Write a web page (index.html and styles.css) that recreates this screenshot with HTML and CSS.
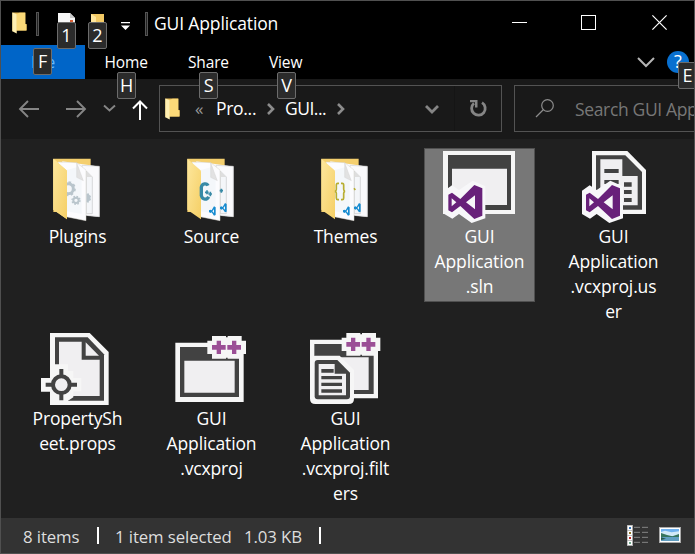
FILE: index.html
```html
<!DOCTYPE html>
<html lang="en">
<head>
<meta charset="utf-8">
<title>GUI Application</title>
<link rel="stylesheet" href="styles.css">
</head>
<body>
<svg class="defs" width="0" height="0" aria-hidden="true">
  <defs>
    <linearGradient id="gold" x1="0" x2="1" y1="0" y2="1"><stop offset="0" stop-color="#fde79d"/><stop offset="1" stop-color="#f5cf65"/></linearGradient>
    <symbol id="mini" viewBox="0 0 44 64" overflow="visible">
      <path d="M1 1h38v34h4v19H14L1 56z" fill="#edc25b"/>
      <path d="M1 1l13 5v57L1 56z" fill="#fff0b3"/>
      <path d="M14 6l8-4h17v33l3 2v17H14z" fill="#fbd978"/>
    </symbol>
    <symbol id="folder" viewBox="0 0 216 222" overflow="visible">
      <path d="M34 26h112v160H34z" fill="#f4cf6e"/>
      <path d="M60 34l100 14 12 2v150l-36-3z" fill="#f8f8fa"/>
      <path d="M120 46l52 3v151l-42-4z" fill="#fafafc" stroke="#d2d2d2" stroke-width="2"/>
      <path d="M133 63l18 18v110h-18z" fill="#f4f6f9" stroke="#b8b8b8" stroke-width="1.5"/>
      <path d="M133 63v18h18z" fill="#dedede"/>
      <path d="M48 36l56 2 28 22v152l-60-12z" fill="#fcfcfe" stroke="#d6d4cd" stroke-width="1.5"/>
      <path d="M74 60l30-8 15 38v102l-45-8z" fill="#f4f7fa"/>
      <path d="M104 38v44l20 10z" fill="#e2e2e2" stroke="#c8c8c8"/>
      <path d="M34 26l38 33q3 2 3 6v143L34 179z" fill="url(#gold)"/>
    </symbol>
    <symbol id="vs" viewBox="0 0 130 130" overflow="visible">
      <path d="M0 30l23-16 21 14L85 0l38 17v96l-41 14-38-27-20 14L0 100z" fill="#f7f7f9"/>
      <path fill-rule="evenodd" d="M12 42l11-6 25 19 42-42 24 10v82l-24 10-42-39-25 19-11-6zM22 53v24l14-12zM92 44L65 65l27 21z" fill="#68217a"/>
    </symbol>
    <symbol id="plus" viewBox="0 0 116 68" overflow="visible">
      <path d="M14 0h42v4h5V0h42v14h13v40h-14v14H61v-3h-5v3H14V54H0V14h14z" fill="#f6f6f6"/>
      <path d="M28 14h13v13h14v14H41v13H28V41H14V27h14zM74 14h13v13h14v14H87v13H74V41H60V27h14z" fill="#9b4f96"/>
    </symbol>
    <symbol id="code" viewBox="0 0 20 28" overflow="visible">
      <path fill-rule="evenodd" d="M0 12l4-2 4 2 7-12 5 3v23l-5 2-7-10-4 2-4-3zM15 9l-5 6 5 5z" fill="#168bd0"/>
    </symbol>
  </defs>
</svg>
<div class="window">
  <header class="titlebar">
    <svg class="mini app" viewBox="0 0 44 64"><use href="#mini"/></svg>
    <i class="divider first"></i>
    <div class="quick page-action">
      <svg width="17" height="19" viewBox="0 0 17 19"><path d="M0 0h12l5 5v14H0z" fill="#f7f7f7"/><path d="M12 0v5h5" fill="#c9c9c9"/><path d="M12 7h3v3h-3z" fill="#d95f36"/></svg>
      <kbd>1</kbd>
    </div>
    <div class="quick folder-action"><svg class="mini-back" viewBox="0 0 13 16"><path d="M0 0h13v16H0z" fill="#f3ca65"/><path d="M0 0l5 3v13H0z" fill="#ffe69c"/></svg><kbd>2</kbd></div>
    <svg class="customize" width="10" height="8" viewBox="0 0 10 8"><path d="M0 0h9v1.200H0zM0 3.500h9L4.500 8z" fill="#fff"/></svg>
    <i class="divider second"></i>
    <h1>GUI Application</h1>
    <div class="controls">
      <svg width="15" height="15"><path d="M0 7.500h15" stroke="#fff"/></svg>
      <svg width="15" height="15"><rect x=".5" y=".5" width="14" height="14" fill="none" stroke="#fff"/></svg>
      <svg width="15" height="15"><path d="M.4.4l14.200 14.200M14.600.4L.4 14.600" stroke="#fff" stroke-width="1.200"/></svg>
    </div>
  </header>
  <nav class="tabs">
    <div class="tab file">File<kbd>F</kbd></div>
    <div class="tab home">Home<kbd>H</kbd></div>
    <div class="tab share">Share<kbd>S</kbd></div>
    <div class="tab view">View<kbd>V</kbd></div>
    <svg class="expand" width="18" height="12"><path d="M1 2l8 8 8-8" fill="none" stroke="#b5b5b5" stroke-width="2"/></svg>
    <div class="help">?<kbd>E</kbd></div>
  </nav>
  <div class="navigation">
    <svg class="arrows" width="134" height="24" viewBox="0 0 134 24" fill="none" stroke="#858585" stroke-width="1.900">
      <path d="M20 12H1.500M9 4l-8 8 8 8M47 12h18.500M58 4l8 8-8 8M85 8.500l5.500 5 5.500-5"/>
      <path d="M121 23V5M114 11.500l7-7 7 7" stroke="#fff" stroke-width="2"/>
    </svg>
    <div class="address">
      <svg class="mini" viewBox="0 0 44 64"><use href="#mini"/></svg>
      <span class="back">«</span><span class="pro">Pro...</span>
      <svg class="chev one" width="8" height="12"><path d="M1 1l5 5-5 5" fill="none" stroke="#8c8c8c" stroke-width="2.600"/></svg>
      <span class="gui">GUI...</span>
      <svg class="chev two" width="8" height="12"><path d="M1 1l5 5-5 5" fill="none" stroke="#8c8c8c" stroke-width="2.600"/></svg>
      <svg class="down" width="14" height="10"><path d="M1 2l6 6 6-6" fill="none" stroke="#858585" stroke-width="2.800"/></svg>
      <div class="refresh"><svg width="18" height="17" viewBox="0 0 18 17"><path d="M4 3.200a6.800 6.800 0 1 0 8-.6" fill="none" stroke="#858585" stroke-width="2.800"/><path d="M0 0h7.500v7.500H5V2.300H0z" fill="#858585"/></svg></div>
    </div>
    <div class="search"><svg width="20" height="19"><circle cx="12.500" cy="6.500" r="5.800" fill="none" stroke="#8c8c8c" stroke-width="1.200"/><path d="M8.500 10.500L1 18" stroke="#8c8c8c" stroke-width="1.300"/></svg><span>Search GUI Application</span></div>
  </div>
  <main class="files">
    <div class="item">
      <svg class="icon" viewBox="36 15 216 222"><use href="#folder" x="36" y="15" width="216" height="222"/>
        <circle cx="115" cy="131" r="15" fill="none" stroke="#b9c5cc" stroke-width="9"/><circle cx="115" cy="131" r="20" fill="none" stroke="#b9c5cc" stroke-width="5" stroke-dasharray="8 7.700"/>
        <circle cx="138" cy="166" r="8" fill="none" stroke="#b9c5cc" stroke-width="6"/><circle cx="138" cy="166" r="12" fill="none" stroke="#b9c5cc" stroke-width="4" stroke-dasharray="5 4.400"/>
        <path d="M170 147l5-3 3 6 5 3-2 6 2 6-6 3-2 6-5-3z" fill="#b9c5cc"/><path d="M70 41l38 33q3 2 3 6v143L70 194z" fill="url(#gold)"/></svg>
      <p>Plugins</p>
    </div>
    <div class="item">
      <svg class="icon" viewBox="438 15 216 222"><use href="#folder" x="438" y="15" width="216" height="222"/>
        <path d="M534 122c-3-8-18-8-20 5v25c4 14 17 13 22 3" fill="none" stroke="#388aa6" stroke-width="10"/>
        <path d="M525 142h11m-5-6v12M535 147h11m-5-7v14M569 137h10m-5-6v12" stroke="#388aa6" stroke-width="5"/>
        <use href="#code" x="537" y="184" width="20" height="28"/><use href="#code" x="570" y="174" width="20" height="28"/></svg>
      <p>Source</p>
    </div>
    <div class="item">
      <svg class="icon" viewBox="30 15 216 222"><use href="#folder" x="30" y="15" width="216" height="222"/>
        <path d="M117 115h-4q-4 0-4 6v12q0 5-4 6 4 1 4 6v14q0 5 4 5h4M123 115h4q4 0 4 6v12q0 5 4 6-4 1-4 6v14q0 5-4 5h-4M162 130l4 5" fill="none" stroke="#b8ae31" stroke-width="5"/>
        <use href="#code" x="129" y="184" width="20" height="28"/><use href="#code" x="162" y="174" width="20" height="28"/></svg>
      <p>Themes</p>
    </div>
    <div class="item selected">
      <svg class="icon" viewBox="72 15 216 222"><path d="M69 18h216v189H69z" fill="#f6f6f6"/><path d="M84 30h189v165H84z" fill="#424242"/><path d="M96 71h165v109H96z" fill="#f0eff1"/><use href="#vs" x="73" y="107" width="130" height="130"/></svg>
      <p>GUI<br>Application<br>.sln</p>
    </div>
    <div class="item">
      <svg class="icon" viewBox="54 15 216 222"><path d="M96 18h106l56 57v132H96z" fill="#f6f6f6"/><path d="M108 31h88l50 50v113H108z" fill="#424242"/><path d="M121 43h66v50h46v88H121z" fill="#f0eff1"/><path d="M133 72h43v12h-43zM133 105h43v12h-43zM192 112h23v13h-23zM192 135h23v12h-23zM192 159h23v12h-23z" fill="#424242"/><use href="#vs" x="66" y="107" width="130" height="130"/></svg>
      <p>GUI<br>Application<br>.vcxproj.us<br>er</p>
    </div>
    <div class="item">
      <svg class="icon" viewBox="36 21 216 222"><path d="M60 24h119l57 57v159H60z" fill="#f6f6f6"/><path d="M75 37h98l49 51v139H75z" fill="#424242"/><path d="M87 50h68v54h54v109H87z" fill="#f0eff1"/><path d="M167 52v40h40z" fill="#f0eff1"/>
        <path d="M74 118h40v20h16v21h24v40h-24v18l-16 10v13H61v-40H33v-41h28z" fill="#f6f6f6"/><circle cx="94" cy="179" r="25" fill="#f0eff1" stroke="#424242" stroke-width="12"/><path d="M94 132v21M94 205v21M47 179h22M120 179h21" stroke="#424242" stroke-width="12"/></svg>
      <p>PropertySh<br>eet.props</p>
    </div>
    <div class="item">
      <svg class="icon" viewBox="48 21 216 222"><path d="M46 53h205v178H46z" fill="#f6f6f6"/><path d="M60 66h177v150H60z" fill="#424242"/><path d="M73 107h151v96H73z" fill="#f0eff1"/><use href="#plus" x="142" y="33" width="116" height="68"/></svg>
      <p>GUI<br>Application<br>.vcxproj</p>
    </div>
    <div class="item">
      <svg class="icon" viewBox="45 21 216 222"><path d="M45 44h204v176H45z" fill="#f6f6f6"/><path d="M58 57h178v150H58z" fill="#424242"/><path d="M70 97h151v98H70z" fill="#f0eff1"/><path d="M61 92h73l43 43v86q0 16-16 16H61q-16 0-16-16V108q0-16 16-16z" fill="#f6f6f6"/><path d="M68 105h59l38 38v71q0 9-9 9H68q-9 0-9-9V114q0-9 9-9z" fill="#424242"/><path d="M71 117h48v29h34v65H71z" fill="#f0eff1"/><path d="M79 132h37v11H79zM79 153h62v10H79zM79 173h62v10H79zM79 193h62v10H79z" fill="#424242"/><use href="#plus" x="140" y="24" width="116" height="68"/></svg>
      <p>GUI<br>Application<br>.vcxproj.filt<br>ers</p>
    </div>
  </main>
  <footer class="status">
    <span class="count">8 items</span><i></i><span class="selection">1 item selected</span><span class="size">1.03 KB</span><i></i>
    <div class="modes">
      <svg width="22" height="22" viewBox="0 0 66 66"><path d="M0 3h18v63H0z" fill="#aaa"/><path d="M2 5h13v13H2zM2 20h13v13H2zM2 35h13v13H2zM2 50h13v13H2z" fill="#fff"/><path d="M6 9h6v6H6z" fill="#3977b8"/><path d="M6 24h6v6H6z" fill="#8e7528"/><path d="M6 39h6v6H6z" fill="#bb2828"/><path d="M6 54h6v6H6z" fill="#6fa58a"/><path d="M21 10h18M45 10h18M21 25h18M45 25h18M21 40h18M45 40h18M21 55h18M45 55h18" stroke="#858585" stroke-width="3"/></svg>
      <svg width="22" height="16" viewBox="0 0 66 48"><path d="M0 0h66v48H0z" fill="#aaa"/><path d="M3 3h60v42H3z" fill="#fff"/><path d="M6 6h54v36H6z" fill="#6fb1ef"/><path d="M6 15l12-4 20 5 22-3v14H6z" fill="#d2e9f7"/><path d="M6 18l18 6 16 4 20-7v10H6z" fill="#37755d"/><path d="M6 31h54v11H6z" fill="#629fc1"/><path d="M6 31l15 4-15 4z" fill="#28584c"/></svg>
    </div>
  </footer>
</div>
</body>
</html>
```

FILE: styles.css
```css
* { box-sizing: border-box; }
body { margin: 0; overflow: hidden; background: #202020; color: #fff; font: 17.500px/25px "Open Sans", "Noto Sans", sans-serif; }
svg { display: block; flex: none; overflow: visible; }
.defs { position: absolute; }
.window { width: 695px; height: 554px; border: 1px solid #505050; overflow: hidden; display: flex; flex-direction: column; }
kbd { position: absolute; width: 19px; height: 27px; border: 1px solid #6c6c6c; border-radius: 2px; background: #2b2b2b; color: #fff; font: 18px/25px "Open Sans", sans-serif; text-align: center; z-index: 2; }
.titlebar { height: 44px; flex: none; background: #000; display: flex; align-items: flex-start; }
.mini { width: 15px; height: 22px; }
.app { margin: 11px 0 0 11px; }
.divider { width: 3px; height: 24px; border: 1px solid #555; background: #222; flex: none; margin-top: 11px; }
.first { margin-left: 9px; }
.quick { position: relative; width: 17px; flex: none; margin-top: 12px; }
.quick kbd { left: -2px; top: 9px; }
.page-action { margin-left: 19px; }
.folder-action { margin-left: 16px; }
.folder-action kbd { left: -3px; }
.page-action kbd { left: -1px; }
.mini-back { width: 13px; height: 16px; margin-top: 1px; }
.customize { margin: 21px 0 0 13px; }
.second { margin-left: 14px; }
h1 { margin: 10px 0 0 6px; font: 17.500px/25px "Open Sans", sans-serif; letter-spacing: -.14px; white-space: nowrap; }
.controls { display: flex; margin: 14px 27px 0 auto; }
.controls svg + svg { margin-left: 54px; }
.controls svg:last-child { margin-left: 56px; }
.tabs { height: 34px; flex: none; background: #000; display: flex; font-size: 15.500px; line-height: 34px; }
.tab { position: relative; width: 81px; padding-left: 21px; letter-spacing: -.15px; }
.file { width: 84px; padding-left: 30px; background: #0065c8; color: #65bdff; }
.home { padding-left: 19.500px; width: 82px; }
.file kbd { left: 32px; top: 3px; }
.home kbd { left: 32px; top: 27px; }
.share kbd { left: 32px; top: 27px; }
.view kbd { left: 29px; top: 27px; }
.expand { margin: 11px 0 0 auto; }
.help { position: relative; width: 22px; height: 22px; margin: 6px 5px 0 12px; border-radius: 50%; background: #0870d0; font-size: 18px; line-height: 21px; text-align: center; }
.help kbd { left: 11px; top: 11px; }
.navigation { height: 60px; flex: none; padding: 6px 0 0 19px; background: #191919; display: flex; align-items: flex-start; }
.arrows { margin: 12px 5px 0 -1px; }
.address { display: flex; align-items: center; width: 343px; height: 47px; flex: none; border: 1px solid #535353; margin-left: 1px; }
.address .mini { margin-left: 5px; }
.back { width: 10px; margin-left: 15px; color: #999; font-size: 17px; }
.pro { width: 42px; margin-left: 11px; letter-spacing: -.3px; }
.one { margin-left: 9px; }
.gui { width: 42px; margin-left: 10px; letter-spacing: -.5px; }
.two { margin-left: 10px; }
.down { margin-left: auto; }
.refresh { display: flex; align-items: center; width: 47px; height: 45px; margin-left: 15px; padding-left: 15px; border-left: 1px solid #151515; }
.search { display: flex; align-items: center; width: 220px; height: 47px; flex: none; border: 1px solid #535353; margin-left: 12px; padding-left: 20px; color: #777; white-space: nowrap; }
.search span { margin-left: 20px; padding-top: 2px; letter-spacing: -.35px; }
.files { height: 379px; flex: none; display: grid; grid-template-columns: repeat(5, 111px); grid-template-rows: 182px 182px; column-gap: 23px; padding: 9px 0 0 22px; margin-left: -1px; align-items: start; }
.item { height: 154px; padding-top: 2px; display: flex; flex-direction: column; align-items: center; }
.selected { background: #777; border: 1px solid #505050; padding-top: 1px; }
.icon { width: 72px; height: 74px; }
.item p { margin: 0; text-align: center; letter-spacing: -.14px; white-space: nowrap; }
.status { height: 35px; flex: none; background: #333; color: #dedede; font-size: 16.800px; letter-spacing: -.1px; display: flex; align-items: center; padding: 2px 12px 0 22px; }
.status i { width: 2px; height: 17px; background: #fff; margin-top: -3px; }
.count { width: 74px; }
.selection { margin-left: 16px; width: 129px; white-space: nowrap; }
.size { width: 75px; }
.modes { display: flex; align-items: center; gap: 10px; margin: -3px 1px 0 auto; }
```
